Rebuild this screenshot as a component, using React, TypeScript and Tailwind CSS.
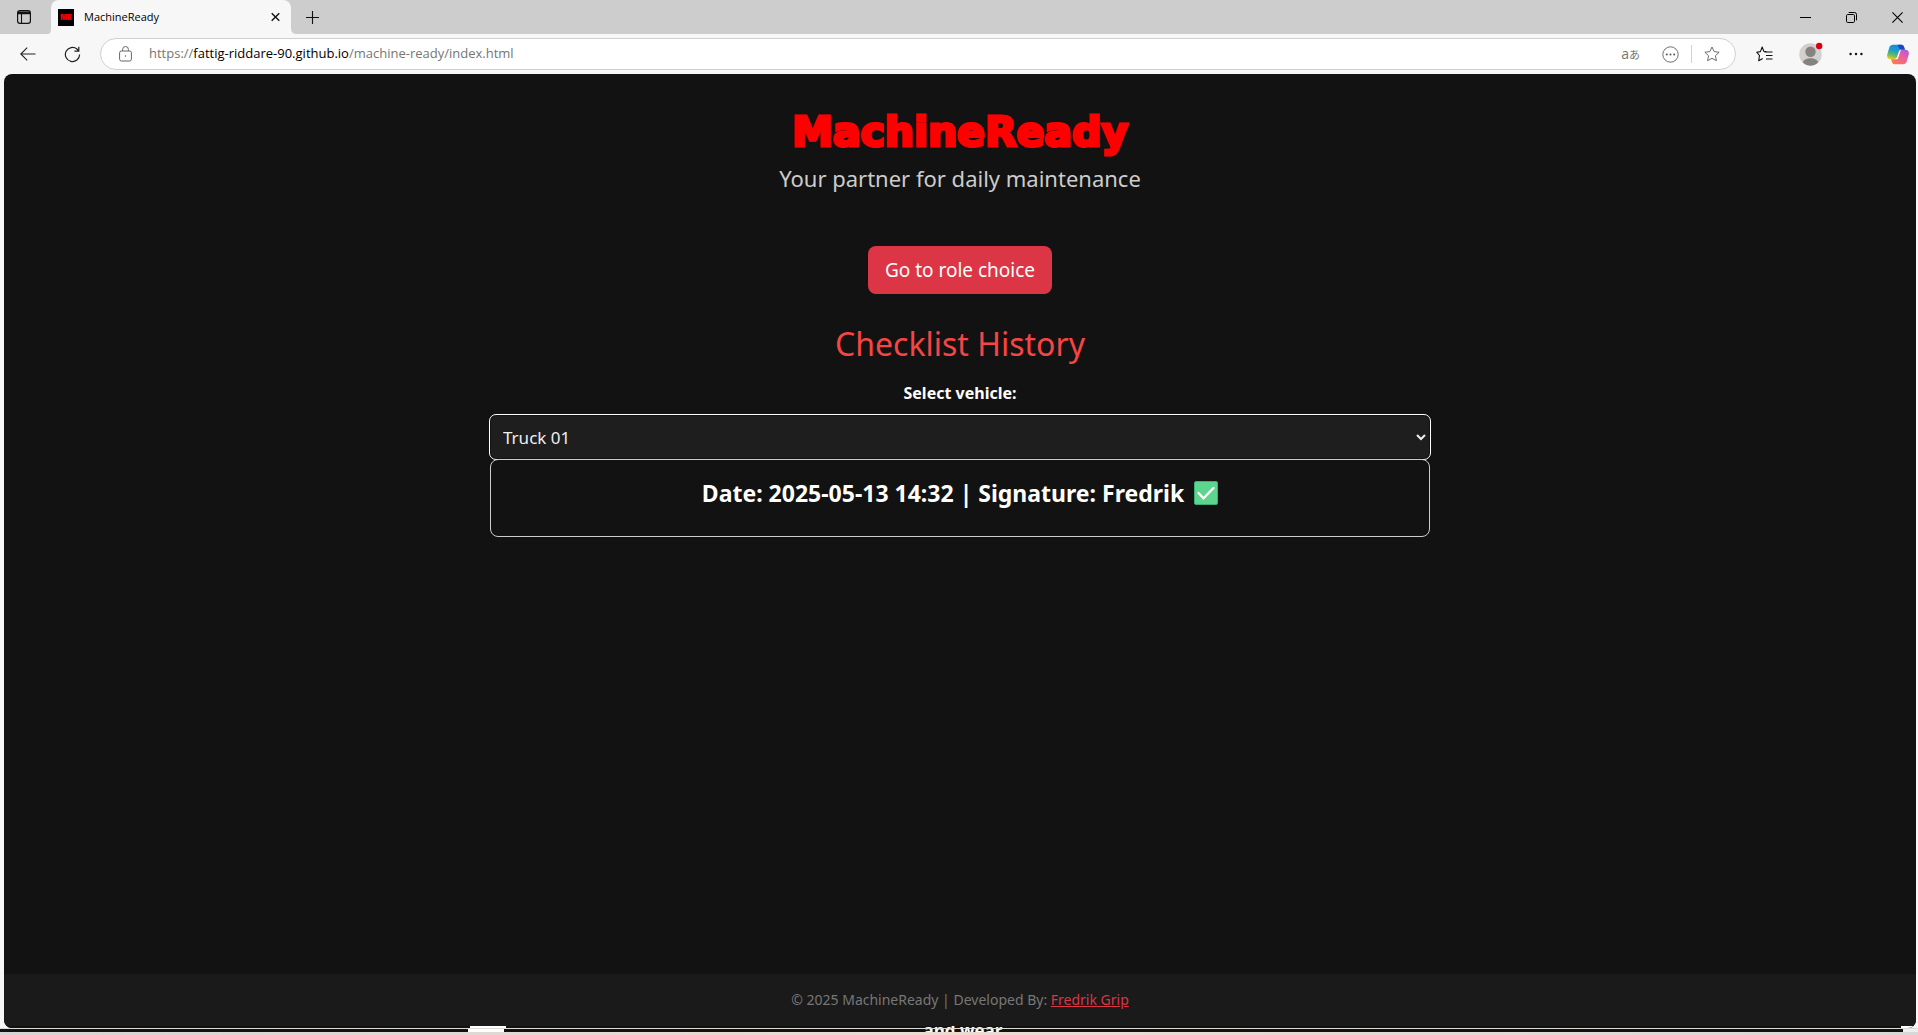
import React from "react";

function TabBar() {
  return (
    <header className="flex h-[34px] shrink-0 items-stretch bg-[#cdcdcd]">
      <div className="flex flex-1 items-stretch">
        <button aria-label="Tab actions" className="flex w-12 shrink-0 items-center justify-center">
          <svg width="14" height="14" viewBox="0 0 14 14" fill="none" stroke="#111">
            <rect x="0.6" y="0.6" width="12.8" height="12.8" rx="2.4" strokeWidth="1.2" />
            <path d="M1 2.4h12M1 3.4h12" strokeWidth="1.6" />
            <path d="M4.5 3v10" strokeWidth="1.1" />
          </svg>
        </button>
        <div className="flex w-[249px] items-stretch">
          <svg className="shrink-0 self-end" width="3" height="6" viewBox="0 0 3 6"><path d="M3 0v6H0C2 6 3 4 3 0z" fill="#f7f7f7" /></svg>
          <div className="flex flex-1 items-center rounded-t-lg bg-[#f7f7f7] pr-[11px] pl-[7px]">
            <svg className="shrink-0" width="16" height="17" viewBox="0 0 16 17">
              <rect width="16" height="17" fill="#000" />
              <text x="8" y="11" textAnchor="middle" fontFamily="Inter" fontWeight="900" fontSize="7" fill="#f00">MR</text>
            </svg>
            <span className="ml-[10px] flex-1 text-[11px] text-black">MachineReady</span>
            <button aria-label="Close tab">
              <svg width="9" height="10" viewBox="0 0 9 10" stroke="#111" strokeWidth="1.4"><path d="M.7 1.2l7.6 7.6M8.3 1.2L.7 8.8" /></svg>
            </button>
          </div>
          <svg className="shrink-0 self-end" width="6" height="6" viewBox="0 0 6 6"><path d="M0 0v6h6C2 6 0 4 0 0z" fill="#f7f7f7" /></svg>
        </div>
        <button aria-label="New tab" className="ml-[9px]">
          <svg width="13" height="13" viewBox="0 0 13 13" stroke="#111" strokeWidth="1.1"><path d="M6.5 0v13M0 6.5h13" /></svg>
        </button>
      </div>
      <div className="flex items-center gap-[35px] pr-[15px]">
        <button aria-label="Minimize"><svg width="11" height="11" viewBox="0 0 11 11" stroke="#000"><path d="M0 5.5h11" /></svg></button>
        <button aria-label="Restore">
          <svg width="11" height="11" viewBox="0 0 11 11" fill="none" stroke="#000"><rect x=".5" y="2.5" width="8" height="8" rx="1.2" /><path d="M2.7 .5H8.5a2 2 0 0 1 2 2V8.3" /></svg>
        </button>
        <button aria-label="Close window"><svg width="11" height="11" viewBox="0 0 11 11" stroke="#000" strokeWidth="1.1"><path d="M.4 .4l10.2 10.2M10.6 .4L.4 10.6" /></svg></button>
      </div>
    </header>
  );
}

const STAR = "M8 1l2.15 4.6 5 .65-3.7 3.45.95 5L8 12.25 3.6 14.7l.95-5L.85 6.25l5-.65z";

function Toolbar() {
  return (
    <nav className="flex h-10 shrink-0 items-center bg-[#f7f7f7] pl-5 pr-[9px]">
      <button aria-label="Back">
        <svg width="16" height="14" viewBox="0 0 16 14" fill="none" stroke="#222" strokeWidth="1.1"><path d="M15.5 7H.8M7.2 .6L.8 7l6.4 6.4" /></svg>
      </button>
      <button aria-label="Refresh" className="ml-7">
        <svg width="17" height="17" viewBox="0 0 17 17" fill="none" stroke="#222" strokeWidth="1.2"><path d="M15.6 8.5A7.1 7.1 0 1 1 13 3l1.6 1.8M14.8 .8v4.3h-4.4" /></svg>
      </button>
      <div className="ml-[19px] flex h-8 flex-1 items-center rounded-full border border-[#d0d0d0] bg-white pl-[18px] pr-[15px]">
        <svg width="13" height="16" viewBox="0 0 13 16" fill="none" stroke="#666"><rect x=".6" y="5" width="11.8" height="10" rx="1.8" /><path d="M3.6 5V3.4a2.9 2.9 0 0 1 5.8 0V5" /><circle cx="6.5" cy="10" r=".7" fill="#555" stroke="none" /></svg>
        <p className="ml-[17px] flex-1 text-[13px] text-[#767676]">
          https://<span className="text-black">fattig-riddare-90.github.io</span>/machine-ready/index.html
        </p>
        <button aria-label="Translate" className="flex items-baseline text-[#767676]">
          <span className="text-[14px] leading-5">a</span><span className="font-['Noto_Sans_CJK_JP',sans-serif] text-[11px] leading-5">あ</span>
        </button>
        <button aria-label="Page options" className="ml-[22px]">
          <svg width="17" height="17" viewBox="0 0 17 17" fill="none" stroke="#6d6d6d"><circle cx="8.5" cy="8.5" r="7.7" /><g fill="#555" stroke="none"><circle cx="4.8" cy="8.5" r="1" /><circle cx="8.5" cy="8.5" r="1" /><circle cx="12.2" cy="8.5" r="1" /></g></svg>
        </button>
        <span className="ml-3 h-[18px] w-px bg-[#d0d0d0]" />
        <button aria-label="Add to favorites" className="ml-3">
          <svg width="16" height="16" viewBox="0 0 16 16" fill="none" stroke="#6d6d6d" strokeLinejoin="round"><path d={STAR} /></svg>
        </button>
      </div>
      <button aria-label="Favorites" className="ml-5">
        <svg width="17" height="16" viewBox="0 0 17 16" fill="none" stroke="#111" strokeWidth="1.1" strokeLinejoin="round"><path d="M10.5 5.7L7.8 5.3 6.2 1 4.4 5.6 .7 6.2l2.8 3.3-.8 5.2 4-2.3" /><path d="M8.5 6h8M10 9.5h6.5M10 13h6.5" /></svg>
      </button>
      <button aria-label="Profile" className="ml-[26px]">
        <svg width="24" height="24" viewBox="0 0 24 24"><circle cx="11.5" cy="12.5" r="11.2" fill="#d2d0ce" /><circle cx="11.5" cy="9.7" r="5.2" fill="#858280" /><path d="M4 20.8c0-6 15-6 15 0a11.2 11.2 0 0 1-15 0z" fill="#858280" /><circle cx="20.2" cy="4" r="3.2" fill="#d80012" /></svg>
      </button>
      <button aria-label="More" className="ml-[26px]">
        <svg width="14" height="4" viewBox="0 0 14 4" fill="#111"><circle cx="1.6" cy="2" r="1.2" /><circle cx="7" cy="2" r="1.2" /><circle cx="12.4" cy="2" r="1.2" /></svg>
      </button>
      <button aria-label="Copilot" className="ml-6">
        <svg width="22" height="21" viewBox="0 0 22 21">
          <defs>
            <linearGradient id="cpA" x1=".6" y1="0" x2=".3" y2="1"><stop offset="0" stopColor="#1787e0" /><stop offset=".45" stopColor="#1f9fc8" /><stop offset=".75" stopColor="#6cbc5a" /><stop offset="1" stopColor="#f0cc14" /></linearGradient>
            <linearGradient id="cpB" x1="1" y1="0" x2=".2" y2="1"><stop offset="0" stopColor="#a25bea" /><stop offset=".5" stopColor="#f0609a" /><stop offset="1" stopColor="#fb7a4c" /></linearGradient>
          </defs>
          <path d="M6.2 .7h8.2c2 0 2.4 1.4 3 3.3l.5 1.7h-3.2c-2 0-2.6 1-3.2 2.8L9.2 15.3H3.6C.8 15.3-.4 13 .3 10.2l2-6.8C2.9 1.6 4 .7 6.2 .7z" fill="url(#cpA)" />
          <path d="M10.5 .7h3.9c2 0 2.4 1.4 3 3.3l.5 1.7h-3.2c-2.6 0-2.8-3-4.2-5z" fill="#1748c7" />
          <path d="M15.8 20.3H7.6c-2 0-2.4-1.4-3-3.3l-.5-1.7h3.2c2 0 2.6-1 3.2-2.8l2.3-6.8h5.6c2.8 0 4 2.3 3.3 5.1l-2 6.8c-.6 1.8-1.7 2.7-3.9 2.7z" fill="url(#cpB)" />
          <path d="M8 14.8c1.5-.3 2-1 2.5-2.4l1.9-5.5c.4-1.1 1-1.2 1.5-1.2L11.2 14c-.3.8-.9 1.3-1.7 1.3H7.3z" fill="#fff" />
        </svg>
      </button>
    </nav>
  );
}

function CheckBadge() {
  return (
    <svg role="img" aria-label="Completed" className="shrink-0" width="24" height="24" viewBox="0 0 24 24">
      <rect x=".5" y=".5" width="23" height="23" rx="1.5" fill="#5bd68c" stroke="#3fae74" />
      <path d="M4.5 12l5 5.3L19.5 7" fill="none" stroke="#fff" strokeWidth="2.4" strokeLinecap="round" />
    </svg>
  );
}

function BackgroundEdge() {
  return (
    <div className="relative shrink-0 bg-[#14120f]">
      <div className="relative z-10 h-px bg-[#d9dcda]" />
      <div className="flex h-[3px] justify-between">
        <span className="ml-[468px] w-9 bg-white" />
        <span className="w-[15px] bg-[#eee]" />
      </div>
      <div className="h-[3px] bg-linear-to-r from-[#d4d4d4] via-[#ecdccf] to-[#d8d8d8]" />
      <div className="absolute inset-x-0 bottom-[3px] h-[6px] overflow-hidden">
        <p className="-mt-0.5 pl-2 text-center text-[17px] leading-[14px] font-bold text-white">and wear</p>
      </div>
    </div>
  );
}

export default function App() {
  return (
    <div className="flex min-h-screen flex-col bg-[#f7f7f7] font-['Open_Sans',sans-serif]">
      <TabBar />
      <Toolbar />
      <div className="mr-0.5 ml-1 flex flex-1 flex-col overflow-hidden rounded-lg bg-[#121212] font-['Noto_Sans',sans-serif]">
        <main className="mx-auto flex w-full max-w-[940px] flex-1 flex-col items-center pt-[34px] text-center">
          <h1 className="font-['DejaVu_Sans',sans-serif] text-[41px] leading-12 font-bold text-[#f00] [-webkit-text-stroke:3px_#f00]">MachineReady</h1>
          <p className="mt-1 text-[22px] leading-9 text-[#ccc]">Your partner for daily maintenance</p>
          <button className="mt-[50px] h-12 rounded-lg bg-[#dc3545] px-[17px] text-[19px] text-white">Go to role choice</button>
          <h2 className="mt-[30px] text-[32px] leading-10 text-[#f64545]">Checklist History</h2>
          <label htmlFor="vehicle" className="mt-[17px] text-[16px] leading-6 font-bold text-white">Select vehicle:</label>
          <select id="vehicle" defaultValue="Truck 01" className="mt-[10px] h-11 w-full rounded-md border border-[#121212] bg-[#1e1e1e] px-2 text-[17px] text-[#eee] outline outline-white">
            <option>Truck 01</option>
          </select>
          <section className="flex h-[78px] w-full items-start justify-center gap-[10px] rounded-lg border border-[#ccc] pt-[21px]">
            <h3 className="text-[23px] leading-6 font-bold text-white">Date: 2025-05-13 14:32 | Signature: Fredrik</h3>
            <CheckBadge />
          </section>
        </main>
        <footer className="bg-[#1a1a1a] py-4 text-center text-[14px] leading-5 text-[#777]">
          © 2025 MachineReady | Developed By: <a href="#" className="text-[#dc3545] underline">Fredrik Grip</a>
        </footer>
        <div className="flex h-0.5 justify-between bg-[#14120f]">
          <span className="ml-[466px] w-9 bg-white" />
          <span className="w-[15px] bg-white" />
        </div>
      </div>
      <BackgroundEdge />
    </div>
  );
}
